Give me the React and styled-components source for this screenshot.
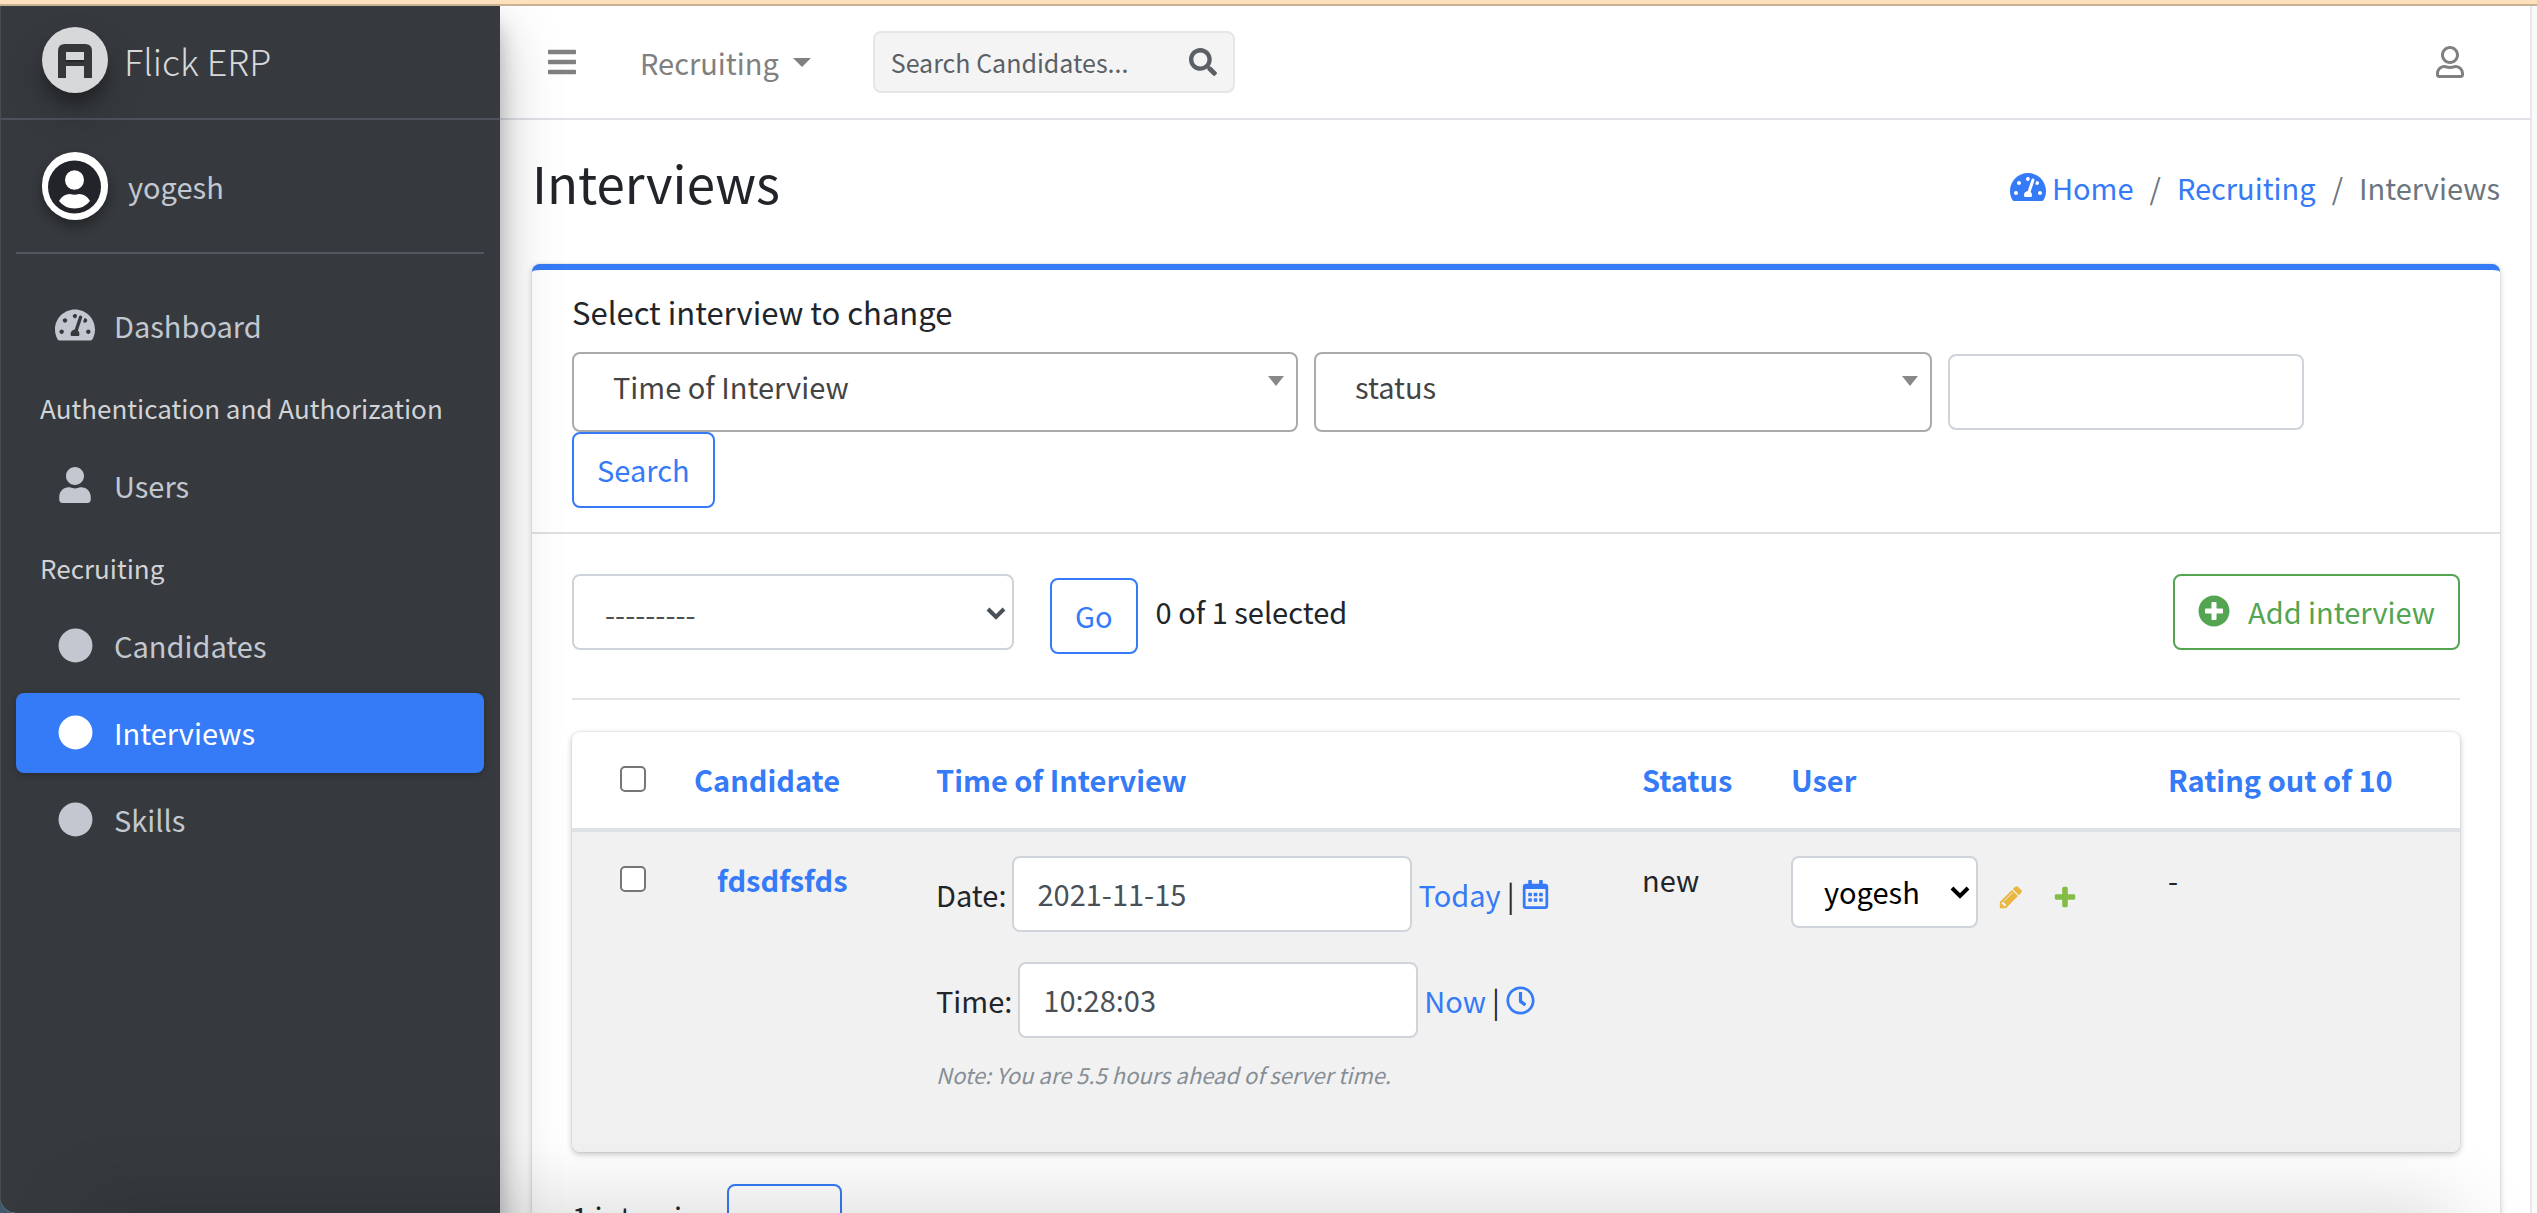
import React from 'react';
import styled, { createGlobalStyle } from 'styled-components';
import {
  FaBars,
  FaCircle,
  FaPlusCircle,
  FaRegCalendarAlt,
  FaRegClock,
  FaRegUser,
  FaSearch,
  FaTachometerAlt,
  FaUser,
} from 'react-icons/fa';

const blue = '#357af6';
const green = '#53a551';
const fieldBorder = '#ced4da';

const GlobalStyle = createGlobalStyle`
  *, *::before, *::after { box-sizing: border-box; }
  html, body, #root { height: 100%; }
  body {
    margin: 0;
    overflow: hidden;
    background: #3f5a6b;
    color: #212529;
    font-family: "Noto Sans CJK SC", "Noto Sans", sans-serif;
    font-size: 29px;
    line-height: 46px;
  }
  button, input, select { font: inherit; color: inherit; margin: 0; }
  a { color: ${blue}; text-decoration: none; }
  h1, h2, p, ul, ol { margin: 0; padding: 0; font-weight: 400; }
  ul, ol { list-style: none; }
  svg { display: block; flex: none; }
`;

const Shell = styled.div`
  position: relative;
  display: flex;
  flex-direction: column;
  height: 100vh;
  overflow: hidden;
  background: #fff;
  border-bottom-left-radius: 16px;
`;

const Strip = styled.div`
  flex: none;
  height: 6px;
  background: #fde0bc;
  border-bottom: 2px solid #c9b293;
`;

const Columns = styled.div`
  flex: 1;
  min-height: 0;
  display: grid;
  grid-template-columns: 500px minmax(0, 1fr) 7px;
  overflow: hidden;
`;

const ScrollTrack = styled.div`
  background: #fafafa;
  border-left: 2px solid #e8e8e8;
`;

const BottomShade = styled.div`
  position: absolute;
  left: 80px;
  right: 80px;
  bottom: -40px;
  height: 40px;
  box-shadow: 0 0 80px rgba(0, 0, 0, 0.24);
  pointer-events: none;
  z-index: 3;
`;

/* Sidebar */

const Sidebar = styled.aside`
  position: relative;
  z-index: 2;
  background: #363a3e;
  border-left: 1px solid #4a4e52;
  box-shadow: 0 28px 56px rgba(0, 0, 0, 0.25), 0 20px 20px rgba(0, 0, 0, 0.22);
`;

const Brand = styled.a`
  display: flex;
  align-items: center;
  gap: 16px;
  height: 114px;
  padding: 0 41px 4px;
  border-bottom: 2px solid #4c525b;
  color: #d7d8d9;
  font-size: 36px;
  font-weight: 300;
`;

const RoundMark = styled.span`
  display: block;
  border-radius: 50%;
  box-shadow: ${(p) =>
    p.$deep
      ? '0 20px 40px rgba(0, 0, 0, 0.19), 0 12px 12px rgba(0, 0, 0, 0.23)'
      : '0 6px 12px rgba(0, 0, 0, 0.16), 0 6px 12px rgba(0, 0, 0, 0.23)'};
`;

const UserPanel = styled.div`
  display: flex;
  align-items: center;
  gap: 20px;
  height: 134px;
  margin: 0 16px 32px 15px;
  padding: 0 26px;
  border-bottom: 2px solid #50595f;

  a { color: #c2c7d0; }
`;

const NavHeader = styled.h2`
  height: 73px;
  padding: 12px 39px 0;
  color: #d1d3d6;
  font-size: 26px;
  white-space: nowrap;
`;

const NavItem = styled.a`
  display: flex;
  align-items: center;
  gap: 16px;
  height: 80px;
  margin: 0 16px 7px 15px;
  padding: 0 36px 2px;
  border-radius: 8px;
  color: ${(p) => (p.$active ? '#fff' : '#c2c7d0')};
  background: ${(p) => (p.$active ? blue : 'transparent')};
  box-shadow: ${(p) => (p.$active ? '0 2px 6px rgba(0, 0, 0, 0.24)' : 'none')};
`;

const NavIcon = styled.span`
  display: flex;
  justify-content: center;
  width: 46px;
`;

/* Top bar */

const Main = styled.main`
  min-width: 0;
`;

const TopBar = styled.header`
  display: flex;
  align-items: center;
  height: 114px;
  padding: 0 64px 0 46px;
  border-bottom: 2px solid #dee2e6;
  color: #808080;
`;

const PlainButton = styled.button`
  display: flex;
  align-items: center;
  gap: 14px;
  padding: 0;
  border: 0;
  background: none;
`;

const MenuButton = styled(PlainButton)`
  margin-left: 62px;
`;

const SearchBox = styled.form`
  display: flex;
  align-items: center;
  width: 362px;
  height: 62px;
  margin: 0 auto 0 62px;
  padding: 0 16px;
  border: 2px solid #e6e6e6;
  border-radius: 8px;
  background: #f4f4f4;
  color: #5b6066;

  input {
    flex: 1;
    min-width: 0;
    padding: 0;
    border: 0;
    background: none;
    font-size: 25px;
    line-height: 40px;
    outline: none;
  }
  input::placeholder { color: #5b6066; opacity: 1; }
`;

const PageHead = styled.div`
  display: flex;
  align-items: flex-end;
  justify-content: space-between;
  padding: 30px 30px 50px 32px;

  h1 {
    font-size: 51px;
    line-height: 64px;
  }
`;

const Breadcrumb = styled.ol`
  display: flex;
  line-height: 44px;
  color: #6c757d;

  li + li::before {
    content: "/";
    padding: 0 16px;
  }
  a {
    display: inline-flex;
    align-items: center;
    gap: 6px;
  }
`;

/* Card */

const Card = styled.section`
  margin: 0 30px 0 32px;
  border-top: 6px solid ${blue};
  border-radius: 8px;
  background: #fff;
  box-shadow: 0 0 2px rgba(0, 0, 0, 0.125), 0 2px 6px rgba(0, 0, 0, 0.2);
`;

const CardHead = styled.div`
  padding: 20px 40px 24px;
  border-bottom: 2px solid #dfdfdf;

  h2 {
    margin-bottom: 18px;
    font-size: 31px;
    line-height: 44px;
  }
`;

const CardBody = styled.div`
  padding: 40px;
`;

const FilterRow = styled.div`
  display: flex;
  align-items: center;
  gap: 16px;
`;

const SelectWrap = styled.div`
  position: relative;
  width: ${(p) => p.$width}px;

  svg {
    position: absolute;
    right: ${(p) => p.$arrowRight}px;
    top: ${(p) => p.$arrowTop}px;
    pointer-events: none;
  }
`;

const Select = styled.select`
  appearance: none;
  display: block;
  width: 100%;
  height: 76px;
  padding: 0 0 2px 31px;
  border: 2px solid ${fieldBorder};
  border-radius: 8px;
  background: #fff;
  color: #495057;
`;

const FilterSelect = styled(Select)`
  height: 80px;
  padding: 0 0 12px 39px;
  border-color: #aaa;
  color: #444;
`;

const UserSelect = styled(Select)`
  height: 72px;
  color: #000;
`;

const TextInput = styled.input`
  width: ${(p) => p.$width}px;
  height: 76px;
  padding: 0 23px 2px;
  border: 2px solid ${fieldBorder};
  border-radius: 8px;
  background: #fff;
  color: #495057;
`;

const OutlineButton = styled.button`
  display: inline-flex;
  align-items: center;
  justify-content: center;
  gap: 18px;
  height: 76px;
  padding: 0 23px 2px;
  border: 2px solid ${(p) => p.$color || blue};
  border-radius: 8px;
  background: #fff;
  color: ${(p) => p.$color || blue};
`;

const ActionRow = styled.div`
  display: flex;
  align-items: flex-start;
  justify-content: space-between;
  padding-bottom: 44px;
  border-bottom: 2px solid #e4e4e4;
  margin-bottom: 32px;
`;

const ActionGroup = styled.div`
  display: flex;
  gap: 18px;
  line-height: 74px;

  button {
    margin: 4px 0 0 18px;
  }
`;

const TableCard = styled.div`
  overflow: hidden;
  border-radius: 8px;
  box-shadow: 0 0 2px rgba(0, 0, 0, 0.125), 0 2px 6px rgba(0, 0, 0, 0.24);
`;

const Table = styled.table`
  width: 100%;
  table-layout: fixed;
  border-collapse: separate;
  border-spacing: 0;

  th, td {
    padding: 24px;
    text-align: left;
    vertical-align: top;
    white-space: nowrap;
  }
  thead th { border-bottom: 4px solid #dee2e6; }
  tbody tr { background: #f1f1f1; }
  tbody th { padding-left: 47px; }
`;

const Col = styled.col`
  width: ${(p) => p.$width}px;
`;

const Check = styled.input.attrs({ type: 'checkbox' })`
  appearance: none;
  display: block;
  width: 26px;
  height: 26px;
  margin: 10px 0 12px 24px;
  border: 2px solid #767676;
  border-radius: 5px;
  background: #fff;
`;

const DateRow = styled.div`
  display: flex;
  align-items: center;
  gap: 6px;
  margin-bottom: ${(p) => (p.$last ? 20 : 30)}px;

  a { display: inline-flex; align-items: center; }
`;

const Note = styled.p`
  padding-bottom: 38px;
  color: #868e96;
  font-size: 22px;
  font-style: italic;
  line-height: 32px;
`;

const UserCell = styled.div`
  display: flex;
  align-items: center;
  gap: 28px;

  a { padding-top: 10px; }
  a:first-of-type { margin-left: -8px; }
`;

const Pager = styled.div`
  display: flex;
  align-items: flex-start;
  gap: 6px;
  margin-top: 32px;
  line-height: 64px;
`;

/* Drawings */

const LogoArt = () => (
  <svg width="66" height="66" viewBox="0 0 66 66" aria-hidden="true">
    <circle cx="33" cy="33" r="33" fill="#d6d8da" />
    <path
      d="M16 51V24q0-7 7-7h20q7 0 7 7v27h-8V39H24v12zM24 25v8h18v-8z"
      fill="#35383b"
      fillRule="evenodd"
    />
    <path d="M24 33h18v2H24z" fill="#242629" />
  </svg>
);

const AvatarArt = () => (
  <svg width="66" height="68" viewBox="0 0 66 68" aria-hidden="true">
    <rect width="66" height="68" rx="33" fill="#fff" />
    <circle cx="32.500" cy="35" r="26.500" fill="#23242a" />
    <ellipse cx="32.500" cy="28" rx="9.500" ry="9.800" fill="#fff" />
    <path
      d="M17 49q4-7 11-7q4.500 1.500 9 0q7 0 11 7q-6 7.500-15.500 7.500T17 49z"
      fill="#fff"
    />
  </svg>
);

const Triangle = ({ width, height, color }) => (
  <svg width={width} height={height} viewBox="0 0 16 10" preserveAspectRatio="none" aria-hidden="true">
    <path d="M0 0h16L8 10z" fill={color} />
  </svg>
);

const Chevron = ({ color }) => (
  <svg width="20" height="13" viewBox="0 0 20 13" aria-hidden="true">
    <path d="M2 2l8 8 8-8" fill="none" stroke={color} strokeWidth="4" />
  </svg>
);

const PencilArt = () => (
  <svg width="26" height="26" viewBox="0 0 1792 1792" fill="#e9b73f" aria-hidden="true">
    <path d="M491 1536l91-91-235-235-91 91v107h128v128h107zm523-928q0-22-22-22-10 0-17 7l-542 542q-7 7-7 17 0 22 22 22 10 0 17-7l542-542q7-7 7-17zm-54-192l416 416-832 832h-416v-416zm683 96q0 53-37 90l-166 166-416-416 166-165q36-38 90-38 53 0 91 38l235 234q37 39 37 91z" />
  </svg>
);

const PlusArt = () => (
  <svg width="26" height="26" viewBox="0 0 1792 1792" fill="#83bd45" aria-hidden="true">
    <path d="M1600 796v192q0 40-28 68t-68 28h-416v416q0 40-28 68t-68 28h-192q-40 0-68-28t-28-68v-416h-416q-40 0-68-28t-28-68v-192q0-40 28-68t68-28h416v-416q0-40 28-68t68-28h192q40 0 68 28t28 68v416h416q40 0 68 28t28 68z" />
  </svg>
);

const NavLink = ({ icon, active, children }) => (
  <NavItem href="#" $active={active} aria-current={active ? 'page' : undefined}>
    <NavIcon>{icon}</NavIcon>
    {children}
  </NavItem>
);

export default function App() {
  return (
    <>
      <GlobalStyle />
      <Shell>
        <Strip />
        <Columns>
          <Sidebar>
            <Brand href="#">
              <RoundMark $deep><LogoArt /></RoundMark>
              Flick ERP
            </Brand>
            <UserPanel>
              <RoundMark><AvatarArt /></RoundMark>
              <a href="#">yogesh</a>
            </UserPanel>
            <nav>
              <NavLink icon={<FaTachometerAlt size={40} />}>Dashboard</NavLink>
              <NavHeader>Authentication and Authorization</NavHeader>
              <NavLink icon={<FaUser size={36} />}>Users</NavLink>
              <NavHeader>Recruiting</NavHeader>
              <NavLink icon={<FaCircle size={35} />}>Candidates</NavLink>
              <NavLink icon={<FaCircle size={35} />} active>Interviews</NavLink>
              <NavLink icon={<FaCircle size={35} />}>Skills</NavLink>
            </nav>
          </Sidebar>

          <Main>
            <TopBar>
              <PlainButton type="button" aria-label="Toggle sidebar"><FaBars size={32} /></PlainButton>
              <MenuButton type="button">
                Recruiting
                <Triangle width={18} height={9} color="#808080" />
              </MenuButton>
              <SearchBox>
                <input type="text" aria-label="Search Candidates" placeholder="Search Candidates..." />
                <PlainButton type="button" aria-label="Search candidates"><FaSearch size={28} /></PlainButton>
              </SearchBox>
              <PlainButton type="button" aria-label="Account"><FaRegUser size={32} /></PlainButton>
            </TopBar>

            <PageHead>
              <h1>Interviews</h1>
              <Breadcrumb>
                <li><a href="#"><FaTachometerAlt size={36} />Home</a></li>
                <li><a href="#">Recruiting</a></li>
                <li>Interviews</li>
              </Breadcrumb>
            </PageHead>

            <Card>
              <CardHead>
                <h2>Select interview to change</h2>
                <FilterRow>
                  <SelectWrap $width={726} $arrowRight={14} $arrowTop={24}>
                    <FilterSelect aria-label="Time of Interview"><option>Time of Interview</option></FilterSelect>
                    <Triangle width={16} height={10} color="#888" />
                  </SelectWrap>
                  <SelectWrap $width={618} $arrowRight={14} $arrowTop={24}>
                    <FilterSelect aria-label="Status"><option>status</option></FilterSelect>
                    <Triangle width={16} height={10} color="#888" />
                  </SelectWrap>
                  <TextInput $width={356} type="text" aria-label="Search interviews" />
                </FilterRow>
                <OutlineButton type="button">Search</OutlineButton>
              </CardHead>

              <CardBody>
                <ActionRow>
                  <ActionGroup>
                    <SelectWrap $width={442} $arrowRight={8} $arrowTop={33}>
                      <Select aria-label="Action"><option>---------</option></Select>
                      <Chevron color="#495057" />
                    </SelectWrap>
                    <OutlineButton type="button">Go</OutlineButton>
                    <span>0 of 1 selected</span>
                  </ActionGroup>
                  <OutlineButton type="button" $color={green}>
                    <FaPlusCircle size={32} />
                    Add interview
                  </OutlineButton>
                </ActionRow>

                <TableCard>
                  <Table>
                    <colgroup>
                      <Col $width={98} />
                      <Col $width={242} />
                      <Col $width={706} />
                      <Col $width={149} />
                      <Col $width={377} />
                      <col />
                    </colgroup>
                    <thead>
                      <tr>
                        <th scope="col"><Check aria-label="Select all" /></th>
                        <th scope="col"><a href="#">Candidate</a></th>
                        <th scope="col"><a href="#">Time of Interview</a></th>
                        <th scope="col"><a href="#">Status</a></th>
                        <th scope="col"><a href="#">User</a></th>
                        <th scope="col"><a href="#">Rating out of 10</a></th>
                      </tr>
                    </thead>
                    <tbody>
                      <tr>
                        <td><Check aria-label="Select fdsdfsfds" /></td>
                        <th scope="row"><a href="#">fdsdfsfds</a></th>
                        <td>
                          <DateRow>
                            <label htmlFor="date">Date:</label>
                            <TextInput id="date" $width={400} type="text" defaultValue="2021-11-15" />
                            <a href="#">Today</a>
                            <span>|</span>
                            <a href="#" aria-label="Choose a date"><FaRegCalendarAlt size={29} /></a>
                          </DateRow>
                          <DateRow $last>
                            <label htmlFor="time">Time:</label>
                            <TextInput id="time" $width={400} type="text" defaultValue="10:28:03" />
                            <a href="#">Now</a>
                            <span>|</span>
                            <a href="#" aria-label="Choose a time"><FaRegClock size={29} /></a>
                          </DateRow>
                          <Note>Note: You are 5.5 hours ahead of server time.</Note>
                        </td>
                        <td>new</td>
                        <td>
                          <UserCell>
                            <SelectWrap $width={187} $arrowRight={8} $arrowTop={30}>
                              <UserSelect aria-label="User"><option>yogesh</option></UserSelect>
                              <Chevron color="#000" />
                            </SelectWrap>
                            <a href="#" aria-label="Change user"><PencilArt /></a>
                            <a href="#" aria-label="Add user"><PlusArt /></a>
                          </UserCell>
                        </td>
                        <td>-</td>
                      </tr>
                    </tbody>
                  </Table>
                </TableCard>

                <Pager>
                  <span>1 interview</span>
                  <OutlineButton type="button">Save</OutlineButton>
                </Pager>
              </CardBody>
            </Card>
          </Main>
          <ScrollTrack />
        </Columns>
        <BottomShade />
      </Shell>
    </>
  );
}
